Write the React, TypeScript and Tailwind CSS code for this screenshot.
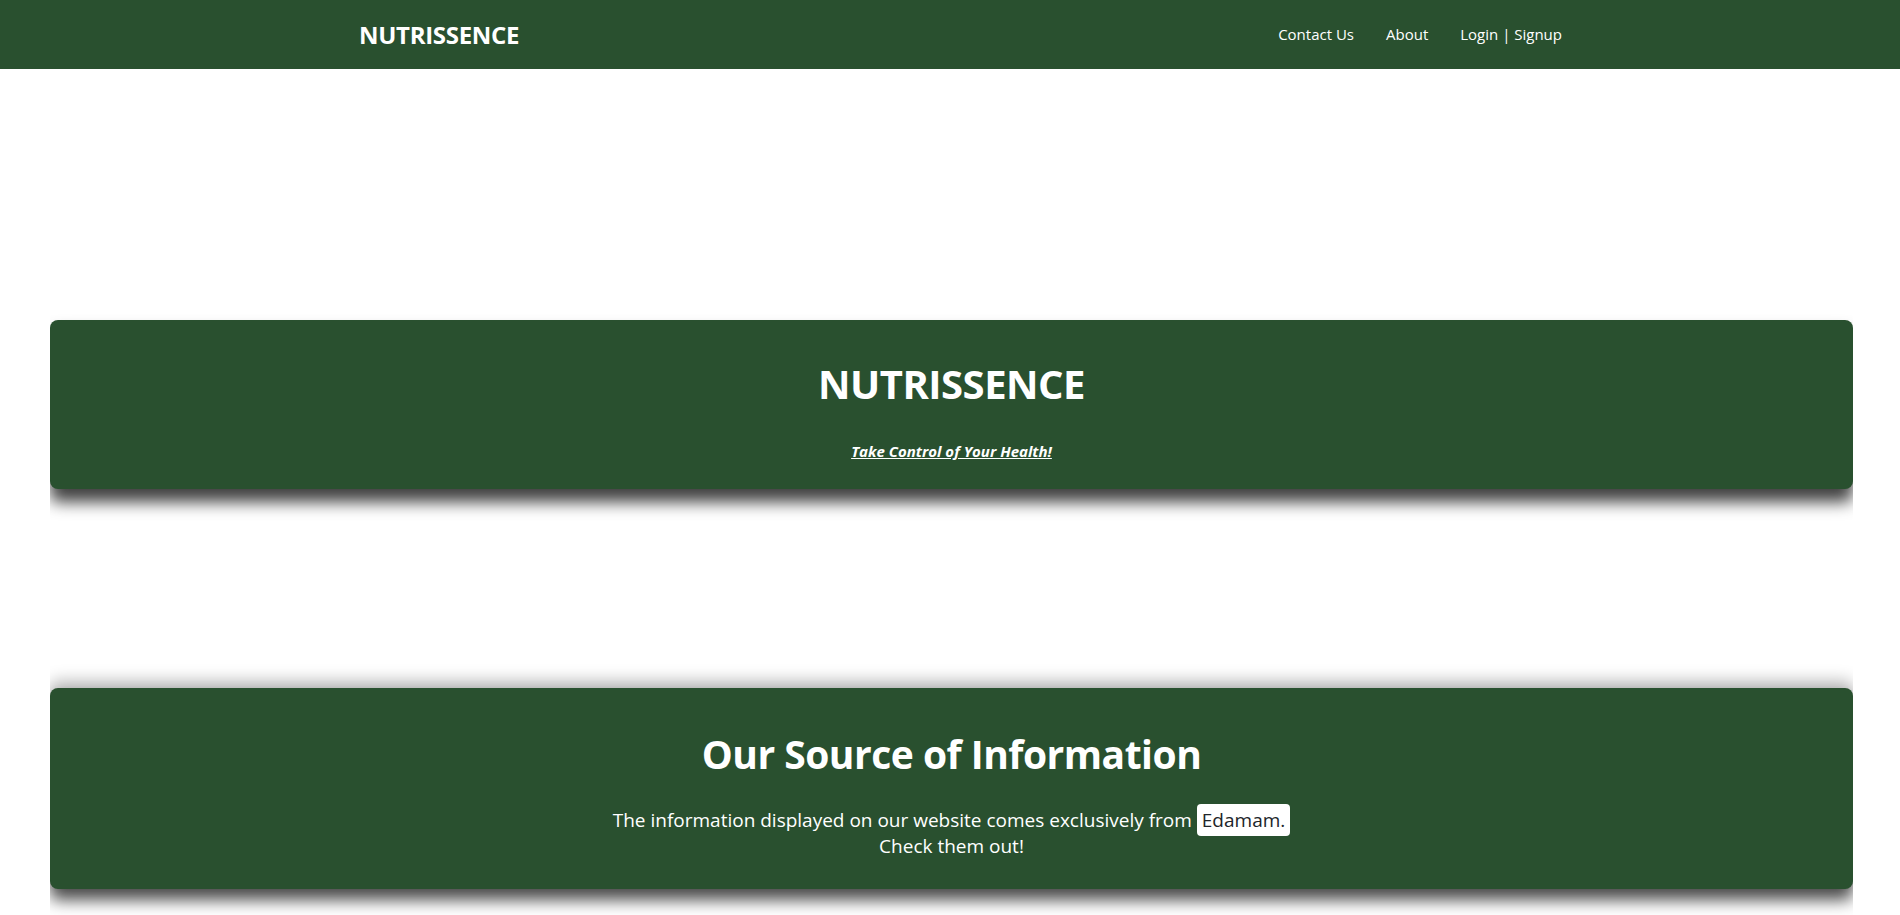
import React from 'react';

const font = "font-['Open_Sans','Noto_Sans',sans-serif]";

const NavBar = () => {
  return (
    <nav className="h-[69px] w-full bg-[#29502f] text-white">
      <div className="ml-[359px] flex h-full w-[1203px] items-center justify-between">
        <a className="text-[24px] font-bold tracking-[-0.3px]">NUTRISSENCE</a>
        <ul className="flex items-center gap-[32px] text-[15px]">
          <li>Contact Us</li>
          <li>About</li>
          <li>Login | Signup</li>
        </ul>
      </div>
    </nav>
  );
};

export default function App() {
  return (
    <div className={`min-h-screen bg-white ${font}`}>
      <NavBar />
      <main className="flex flex-col pb-[26px] pl-[50px] pr-[47px] pt-[251px]">
        <section className="flex h-[169px] flex-col items-center rounded-[8px] bg-[#29502f] pt-[40px] text-white shadow-[0_13px_16px_rgba(0,0,0,0.75)] [clip-path:inset(-40px_0px_-40px_0px)]">
          <h1 className="text-[40px] font-bold leading-[48px] tracking-[-0.5px]">NUTRISSENCE</h1>
          <p className="mt-[33px] text-[15px] font-bold italic leading-[20px] underline">Take Control of Your Health!</p>
        </section>

        <section className="mt-[199px] flex h-[201px] flex-col items-center rounded-[8px] bg-[#29502f] pt-[42px] text-white shadow-[0_11px_16px_rgba(0,0,0,0.7),0_-8px_15px_rgba(0,0,0,0.25)] [clip-path:inset(-40px_0px_-40px_0px)]">
          <h2 className="text-[39px] font-bold leading-[47px] tracking-[-0.5px]">Our Source of Information</h2>
          <p className="mt-[30px] text-center text-[19px] leading-[26px]">
            The information displayed on our website comes exclusively from{' '}
            <span className="rounded-[4px] bg-white px-[5px] py-[3px] text-[#212529]">Edamam.</span>
            <br />
            Check them out!
          </p>
        </section>
      </main>
    </div>
  );
}
